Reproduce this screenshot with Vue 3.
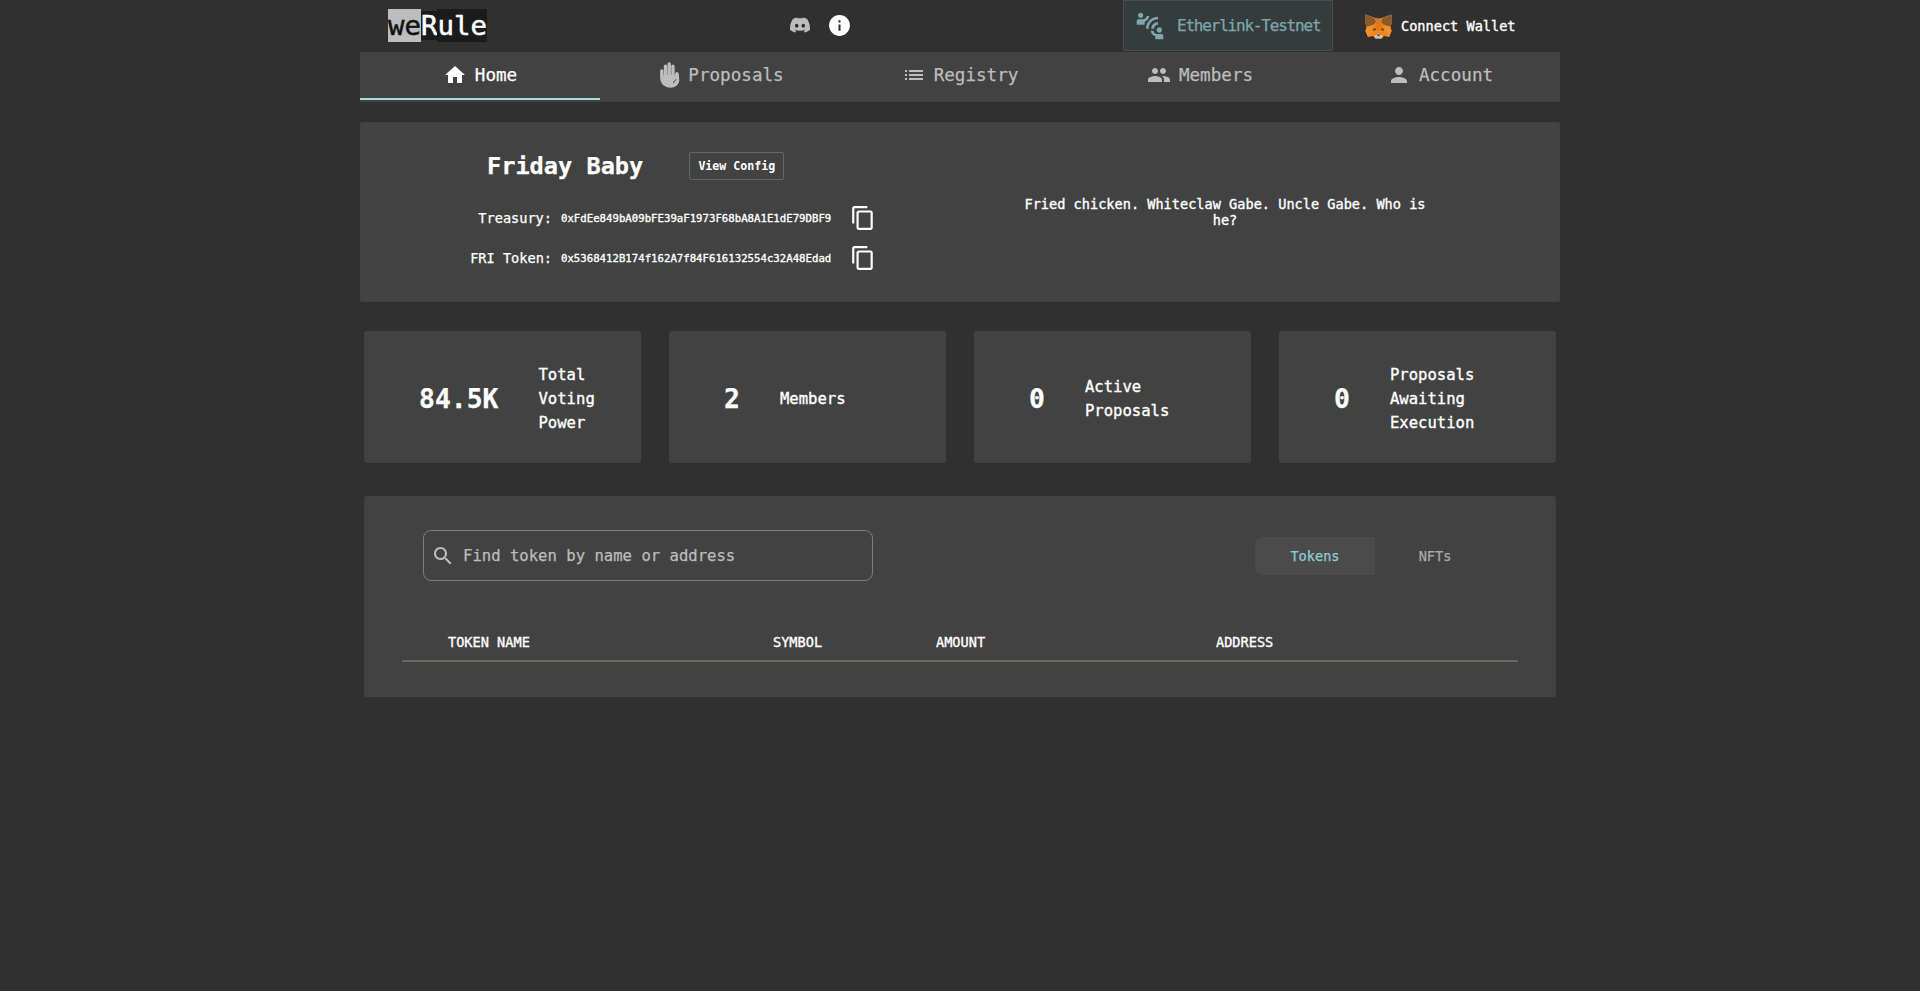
<template>
  <div class="page">
    <header class="topbar">
      <div class="logo"><span class="logo-we">we</span><span class="logo-r">R</span><span class="logo-ule">ule</span></div>
      <div class="top-icons">
        <svg class="discord" viewBox="0 0 24 24"><path d="M20.317 4.3698a19.7913 19.7913 0 00-4.8851-1.5152.0741.0741 0 00-.0785.0371c-.211.3753-.4447.8648-.6083 1.2495-1.8447-.2762-3.68-.2762-5.4868 0-.1636-.3933-.4058-.8742-.6177-1.2495a.077.077 0 00-.0785-.037 19.7363 19.7363 0 00-4.8852 1.515.0699.0699 0 00-.0321.0277C.5334 9.0458-.319 13.5799.0992 18.0578a.0824.0824 0 00.0312.0561c2.0528 1.5076 4.0413 2.4228 5.9929 3.0294a.0777.0777 0 00.0842-.0276c.4616-.6304.8731-1.2952 1.226-1.9942a.076.076 0 00-.0416-.1057c-.6528-.2476-1.2743-.5495-1.8722-.8923a.077.077 0 01-.0076-.1277c.1258-.0943.2517-.1923.3718-.2914a.0743.0743 0 01.0776-.0105c3.9278 1.7933 8.18 1.7933 12.0614 0a.0739.0739 0 01.0785.0095c.1202.099.246.1981.3728.2924a.077.077 0 01-.0066.1276 12.2986 12.2986 0 01-1.873.8914.0766.0766 0 00-.0407.1067c.3604.698.7719 1.3628 1.225 1.9932a.076.076 0 00.0842.0286c1.961-.6067 3.9495-1.5219 6.0023-3.0294a.077.077 0 00.0313-.0552c.5004-5.177-.8382-9.6739-3.5485-13.6604a.061.061 0 00-.0312-.0286zM8.02 15.3312c-1.1825 0-2.1569-1.0857-2.1569-2.419 0-1.3332.9555-2.4189 2.157-2.4189 1.2108 0 2.1757 1.0952 2.1568 2.419 0 1.3332-.9555 2.4189-2.1569 2.4189zm7.9748 0c-1.1825 0-2.1569-1.0857-2.1569-2.419 0-1.3332.9554-2.4189 2.1569-2.4189 1.2108 0 2.1757 1.0952 2.1568 2.419 0 1.3332-.946 2.4189-2.1568 2.4189Z"/></svg>
        <svg class="info" viewBox="0 0 24 24"><path d="M12 2C6.48 2 2 6.48 2 12s4.48 10 10 10 10-4.48 10-10S17.52 2 12 2zm1 15h-2v-6h2v6zm0-8h-2V7h2v2z"/></svg>
      </div>
      <div class="network">
        <svg viewBox="0 0 24 24"><path d="M11 14H9c0-4.97 4.03-9 9-9v2c-3.87 0-7 3.13-7 7zm7-3V9c-2.76 0-5 2.24-5 5h2c0-1.66 1.34-3 3-3zM7 4c0-1.11-.89-2-2-2s-2 .89-2 2 .89 2 2 2 2-.89 2-2zm4.45.5h-2C9.21 5.92 7.99 7 6.5 7h-3C2.67 7 2 7.67 2 8.5V11h6V8.74c1.86-.59 3.25-2.23 3.45-4.24zM19 17c1.11 0 2-.89 2-2s-.89-2-2-2-2 .89-2 2 .89 2 2 2zm1.5 1h-3c-1.49 0-2.71-1.08-2.95-2.5h-2c.2 2.01 1.59 3.65 3.45 4.24V22h6v-2.5c0-.83-.67-1.5-1.5-1.5z"/></svg>
        <span>Etherlink-Testnet</span>
      </div>
      <div class="wallet">
        <svg class="fox" viewBox="0 0 27 25">
          <polygon points="0.5,0.5 13.5,5 26.5,0.5 27,8 25.5,13 26.5,17 24,23 19,22 16.5,24.5 10.5,24.5 8,22 3,23 0.5,17 1.5,13 0,8" fill="#f6851b"/>
          <polygon points="0.5,0.5 10,4.5 11,8 8,11 1.5,13 0,8" fill="#8a5a2e"/>
          <polygon points="26.5,0.5 17,4.5 16,8 19,11 25.5,13 27,8" fill="#8a5a2e"/>
          <polygon points="10,4.5 17,4.5 16,8 11,8" fill="#c9803a"/>
          <polygon points="11,8 13.5,8 13.5,17 10,14" fill="#e2761b"/>
          <polygon points="16,8 13.5,8 13.5,17 17,14" fill="#e2761b"/>
          <polygon points="1.5,13 8,11 6,17 3,23 0.5,17" fill="#f09030"/>
          <polygon points="25.5,13 19,11 21,17 24,23 26.5,17" fill="#f09030"/>
          <polygon points="9,14 11.5,15.5 8,17" fill="#4a3a2a"/>
          <polygon points="18,14 15.5,15.5 19,17" fill="#4a3a2a"/>
          <polygon points="9,22 13.5,19.5 18,22 16.5,24.5 10.5,24.5" fill="#d7c1b3"/>
          <polygon points="11.5,20.5 15.5,20.5 13.5,22.5" fill="#3a3a3a"/>
        </svg>
        <span>Connect Wallet</span>
      </div>
    </header>

    <nav class="tabs">
      <a v-for="t in tabs" :key="t.label" class="tab" :class="{ active: t.active }">
        <svg :class="t.cls" viewBox="0 0 24 24"><path :d="t.icon"/></svg>
        <span>{{ t.label }}</span>
      </a>
    </nav>

    <section class="dao card">
      <div class="dao-left">
        <div class="dao-title">
          <h1>Friday Baby</h1>
          <button class="config-btn">View Config</button>
        </div>
        <div v-for="a in addresses" :key="a.label" class="addr-row">
          <span class="addr-label">{{ a.label }}:</span>
          <span class="addr">{{ a.value }}</span>
          <svg class="copy" viewBox="0 0 24 24"><path d="M16 1H4c-1.1 0-2 .9-2 2v14h2V3h12V1zm3 4H8c-1.1 0-2 .9-2 2v14c0 1.1.9 2 2 2h11c1.1 0 2-.9 2-2V7c0-1.1-.9-2-2-2zm0 16H8V7h11v14z"/></svg>
        </div>
      </div>
      <div class="dao-right">
        <p>Fried chicken. Whiteclaw Gabe. Uncle Gabe. Who is he?</p>
      </div>
    </section>

    <section class="stats">
      <div v-for="s in stats" :key="s.label" class="stat card">
        <span class="stat-value">{{ s.value }}</span>
        <span class="stat-label">{{ s.label }}</span>
      </div>
    </section>

    <section class="assets card">
      <div class="assets-top">
        <div class="search">
          <svg viewBox="0 0 24 24"><path d="M15.5 14h-.79l-.28-.27C15.41 12.59 16 11.11 16 9.5 16 5.91 13.09 3 9.5 3S3 5.91 3 9.5 5.91 16 9.5 16c1.61 0 3.09-.59 4.23-1.57l.27.28v.79l5 4.99L20.49 19l-4.99-5zm-6 0C7.01 14 5 11.99 5 9.5S7.01 5 9.5 5 14 7.01 14 9.5 11.99 14 9.5 14z"/></svg>
          <span>Find token by name or address</span>
        </div>
        <div class="switch">
          <button class="sw on">Tokens</button>
          <button class="sw">NFTs</button>
        </div>
      </div>
      <div class="thead">
        <span>TOKEN NAME</span>
        <span>SYMBOL</span>
        <span>AMOUNT</span>
        <span>ADDRESS</span>
      </div>
    </section>
  </div>
</template>

<script setup>
const tabs = [
  { label: 'Home', active: true, cls: 'i-home', icon: 'M10 20v-6h4v6h5v-8h3L12 3 2 12h3v8z' },
  { label: 'Proposals', cls: 'i-hand', icon: 'M3.5 14V8.5a1.45 1.45 0 012.9 0V12h.3V4.5a1.45 1.45 0 012.9 0V12h.3V2.5a1.45 1.45 0 012.9 0V12h.3V4.5a1.45 1.45 0 012.9 0V13l.6-2.5a1.5 1.5 0 012.9.7L20 17c-.6 3.5-3.4 6-7.5 6-5 0-9-3.5-9-9zM17 15.5l-2.6 3.2.5.4 2.6-3.2z' },
  { label: 'Registry', cls: 'i-list', icon: 'M3 13h2v-2H3v2zm0 4h2v-2H3v2zm0-8h2V7H3v2zm4 4h14v-2H7v2zm0 4h14v-2H7v2zM7 7v2h14V7H7z' },
  { label: 'Members', cls: 'i-group', icon: 'M16 11c1.66 0 2.99-1.34 2.99-3S17.66 5 16 5c-1.66 0-3 1.34-3 3s1.34 3 3 3zm-8 0c1.66 0 2.99-1.34 2.99-3S9.66 5 8 5C6.34 5 5 6.34 5 8s1.34 3 3 3zm0 2c-2.33 0-7 1.17-7 3.5V19h14v-2.5c0-2.33-4.67-3.5-7-3.5zm8 0c-.29 0-.62.02-.97.05 1.16.84 1.97 1.97 1.97 3.45V19h6v-2.5c0-2.33-4.67-3.5-7-3.5z' },
  { label: 'Account', cls: 'i-person', icon: 'M12 12c2.21 0 4-1.79 4-4s-1.79-4-4-4-4 1.79-4 4 1.79 4 4 4zm0 2c-2.67 0-8 1.34-8 4v2h16v-2c0-2.66-5.33-4-8-4z' }
]

const addresses = [
  { label: 'Treasury', value: '0xFdEe849bA09bFE39aF1973F68bA8A1E1dE79DBF9' },
  { label: 'FRI Token', value: '0x5368412B174f162A7f84F616132554c32A48Edad' }
]

const stats = [
  { value: '84.5K', label: 'Total Voting Power' },
  { value: '2', label: 'Members' },
  { value: '0', label: 'Active Proposals' },
  { value: '0', label: 'Proposals Awaiting Execution' }
]
</script>

<style>
html, body {
  background: #303030;
}
</style>

<style scoped>
.page {
  width: 1200px;
  min-height: 991px;
  margin: 0 auto;
  color: #fff;
  font-family: "DejaVu Sans Mono", "Liberation Mono", monospace;
  -webkit-text-stroke: 0.25px;
}

.card {
  background: #424242;
  border-radius: 3px;
}

.topbar {
  height: 52px;
  display: flex;
  align-items: center;
}

.logo {
  display: flex;
  align-items: center;
  margin: 0 0 2px 28px;
  font-size: 27.4px;
  line-height: 33px;
  -webkit-text-stroke: 0.5px;
}

.logo-we { background: #bdbdbd; color: #111; }
.logo-r { background: #1b1b1b; line-height: 29px; }
.logo-ule { background: #1b1b1b; }

.top-icons {
  display: flex;
  align-items: center;
  gap: 17px;
  margin-left: 303px;
  margin-bottom: 2px;
}

.discord { width: 20px; height: 20px; fill: #bdbdbd; }
.info { width: 25px; height: 25px; fill: #fff; }

.network {
  width: 210px;
  height: 51px;
  box-sizing: border-box;
  margin: 0 0 1px 271px;
  display: flex;
  align-items: center;
  gap: 11px;
  padding-left: 10px;
  background: #363b3c;
  border: 1px solid #434d4e;
  color: #7ea7ac;
  font-size: 16px;
  letter-spacing: -1.2px;
}

.network svg { width: 32px; height: 32px; fill: #7ea7ac; flex-shrink: 0; }

.wallet {
  display: flex;
  align-items: center;
  gap: 9px;
  margin-left: 32px;
  font-size: 13.6px;
  -webkit-text-stroke: 0.35px;
}

.fox { width: 27px; height: 25px; }

.tabs {
  height: 50px;
  display: grid;
  grid-template-columns: repeat(5, 1fr);
  background: #424242;
}

.tab {
  height: 48px;
  display: flex;
  align-items: center;
  justify-content: center;
  gap: 8px;
  box-sizing: border-box;
  color: #bdbdbd;
  font-size: 17.6px;
  border-bottom: 2px solid transparent;
}

.tab svg { width: 24px; height: 24px; fill: currentColor; flex-shrink: 0; }
.tab .i-hand { width: 28px; height: 28px; margin-right: -4px; }
.tab .i-hand path { fill-rule: evenodd; }
.tab.active { color: #fff; border-bottom-color: #a8dadf; }

.dao {
  margin-top: 20px;
  height: 180px;
  display: flex;
}

.dao-left { width: 540px; padding-top: 26px; }

.dao-title {
  display: flex;
  align-items: center;
  height: 36px;
  padding-left: 127px;
  margin-bottom: 14px;
}

.dao-title h1 {
  margin: 0;
  font-size: 23.6px;
  line-height: 36px;
  font-weight: 700;
}

.config-btn {
  margin-left: 46px;
  width: 95px;
  height: 28px;
  padding: 0;
  background: transparent;
  border: 1px solid #666;
  border-radius: 2px;
  color: #fff;
  font-family: inherit;
  font-size: 11.6px;
  font-weight: 700;
  -webkit-text-stroke: 0;
}

.addr-row {
  display: flex;
  align-items: center;
  height: 40px;
}

.addr-label {
  width: 192px;
  text-align: right;
  font-size: 13.6px;
}

.addr {
  margin-left: 9px;
  width: 270px;
  font-size: 10.7px;
  white-space: nowrap;
  -webkit-text-stroke: 0.35px;
}

.copy { width: 26px; height: 26px; margin-left: 19px; fill: #fff; }

.dao-right {
  flex: 1;
  display: flex;
  align-items: center;
  justify-content: center;
  padding-right: 10px;
}

.dao-right p {
  margin: 0;
  width: 420px;
  text-align: center;
  font-size: 13.6px;
  line-height: 16px;
  -webkit-text-stroke: 0.35px;
}

.stats {
  margin: 29px 4px 0;
  display: grid;
  grid-template-columns: repeat(4, 1fr);
  gap: 28px;
}

.stat {
  height: 132px;
  box-sizing: border-box;
  display: flex;
  align-items: center;
  gap: 40px;
  padding: 3px 0 0 55px;
}

.stat-value {
  font-size: 26.4px;
  font-weight: 700;
}

.stat-label {
  max-width: 110px;
  font-size: 15.6px;
  line-height: 24px;
  -webkit-text-stroke: 0.35px;
}

.assets {
  margin: 33px 4px 0;
  height: 201px;
  box-sizing: border-box;
  padding: 34px 38px 0;
}

.assets-top {
  display: flex;
  align-items: center;
  justify-content: space-between;
  padding: 0 23px 0 21px;
  height: 51px;
}

.search {
  width: 450px;
  height: 51px;
  box-sizing: border-box;
  display: flex;
  align-items: center;
  gap: 8px;
  padding-left: 7px;
  border: 1px solid #7d7d7d;
  border-radius: 8px;
  color: #bdbdbd;
  font-size: 15.6px;
}

.search svg { width: 24px; height: 24px; fill: #bdbdbd; }

.switch { display: flex; }

.sw {
  width: 120px;
  height: 38px;
  padding: 0;
  background: transparent;
  border: none;
  color: #aaa;
  font-family: inherit;
  font-size: 13.6px;
}

.sw.on {
  background: #4b4b4b;
  color: #8fcdd4;
  border-radius: 8px 0 0 8px;
}

.thead {
  margin-top: 47px;
  height: 34px;
  padding-top: 6px;
  box-sizing: border-box;
  display: grid;
  grid-template-columns: 371px 163px 280px 1fr;
  border-bottom: 2px solid #6b6857;
  font-size: 13.6px;
  -webkit-text-stroke: 0.35px;
}

.thead span:first-child { padding-left: 46px; }
</style>
